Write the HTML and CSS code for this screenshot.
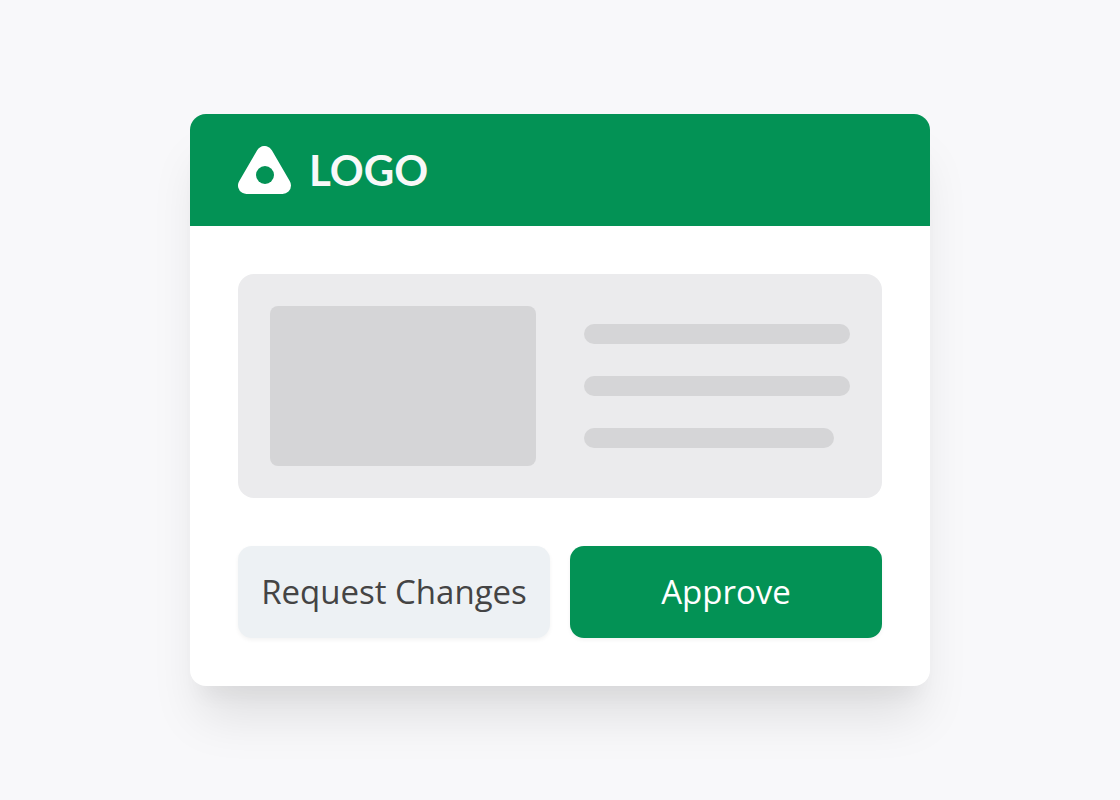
FILE: index.html
```html
<!DOCTYPE html>
<html lang="en">
<head>
  <meta charset="UTF-8">
  <meta name="viewport" content="width=device-width, initial-scale=1.0">
  <title>Approval</title>
  <link rel="stylesheet" href="styles.css">
</head>
<body>

  <main class="card">
    <header class="card-header">
      <svg class="logo-mark" viewBox="0 0 53 48" aria-hidden="true">
        <path class="logo-triangle" d="M26.5 8.5 L8.5 39.5 H44.5 Z"/>
        <circle class="logo-hole" cx="27" cy="29" r="9"/>
      </svg>
      <span class="logo-name">LOGO</span>
    </header>

    <div class="card-body">
      <div class="preview">
        <div class="preview-image"></div>
        <div class="preview-lines">
          <div class="line"></div>
          <div class="line"></div>
          <div class="line line-short"></div>
        </div>
      </div>

      <div class="actions">
        <button type="button" class="btn">Request Changes</button>
        <button type="button" class="btn btn-approve">Approve</button>
      </div>
    </div>
  </main>

</body>
</html>
```
FILE: styles.css
```css
* {
  box-sizing: border-box;
}
body {
  margin: 0;
  min-height: 100vh;
  display: flex;
  align-items: center;
  justify-content: center;
  background-color: #f8f8fa;
  font-family: "Open Sans", sans-serif;
}
.card {
  width: 100%;
  max-width: 740px;
  background-color: #fff;
  border-radius: 16px;
  box-shadow: 0 40px 50px -10px rgba(0, 0, 0, 0.1), 0 20px 20px -10px rgba(0, 0, 0, 0.04);
}

/* Header */
.card-header {
  display: flex;
  align-items: center;
  gap: 18px;
  padding: 32px 48px;
  background-color: #039255;
  border-radius: 16px 16px 0 0;
}
.logo-mark {
  width: 53px;
  height: 48px;
}
.logo-triangle {
  fill: #fff;
  stroke: #fff;
  stroke-width: 17;
  stroke-linejoin: round;
}
.logo-hole {
  fill: #039255;
}
.logo-name {
  font-family: Lato, sans-serif;
  font-size: 42px;
  font-weight: bold;
  line-height: 48px;
  color: #f8f8f8;
}

/* Body */
.card-body {
  display: grid;
  gap: 48px;
  padding: 48px;
}
.preview {
  display: grid;
  grid-template-columns: 1fr 1fr;
  align-items: center;
  gap: 48px;
  padding: 32px;
  background-color: #ebebed;
  border-radius: 16px;
}
.preview-image {
  height: 160px;
  background-color: #d5d5d7;
  border-radius: 8px;
}
.preview-lines {
  display: grid;
  gap: 32px;
}
.line {
  height: 20px;
  background-color: #d5d5d7;
  border-radius: 10px;
}
.line-short {
  width: 94%;
}

/* Buttons */
.actions {
  display: grid;
  grid-template-columns: 1fr 1fr;
  gap: 20px;
}
.btn {
  padding: 20px 0;
  border: none;
  border-radius: 14px;
  background-color: #edf1f4;
  color: #444;
  font-family: inherit;
  font-size: 33px;
  line-height: 52px;
  cursor: pointer;
  box-shadow: 0 2px 4px rgba(0, 0, 0, 0.05);
}
.btn-approve {
  background-color: #039255;
  color: #fff;
}
```
